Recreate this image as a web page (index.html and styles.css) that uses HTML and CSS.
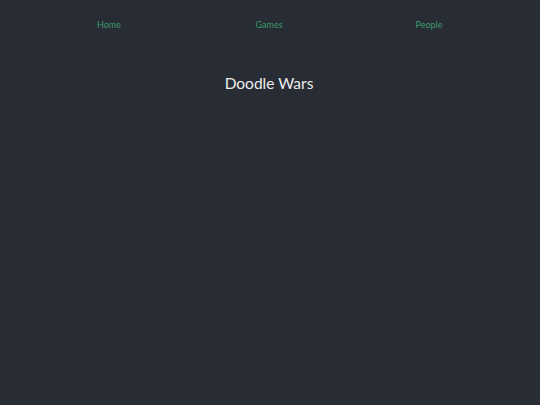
FILE: index.html
```html
<!DOCTYPE html>
<html>
<head>
<meta charset="utf-8">
<link rel="stylesheet" href="styles.css">
</head>
<body>
<nav class="nav">
  <a class="nav-link" href="#">Home</a>
  <a class="nav-link" href="#">Games</a>
  <a class="nav-link" href="#">People</a>
</nav>
<h1 class="title">Doodle Wars</h1>
</body>
</html>
```
FILE: styles.css
```css
html, body {
  margin: 0;
  padding: 0;
  background: #282c34;
  height: 100%;
}
body {
  font-family: Lato, "Open Sans", sans-serif;
}
.nav {
  display: grid;
  grid-template-columns: repeat(3, 160px);
  justify-content: center;
  padding-top: 19px;
  margin-left: -2px;
}
.nav-link {
  text-align: center;
  color: #3a9a6c;
  text-decoration: none;
  font-size: 9px;
  line-height: 12px;
}
.title {
  margin: 42px 0 0;
  text-align: center;
  color: #ececec;
  font-weight: 400;
  font-size: 15.5px;
  line-height: 20px;
  margin-left: -2px;
}
```
